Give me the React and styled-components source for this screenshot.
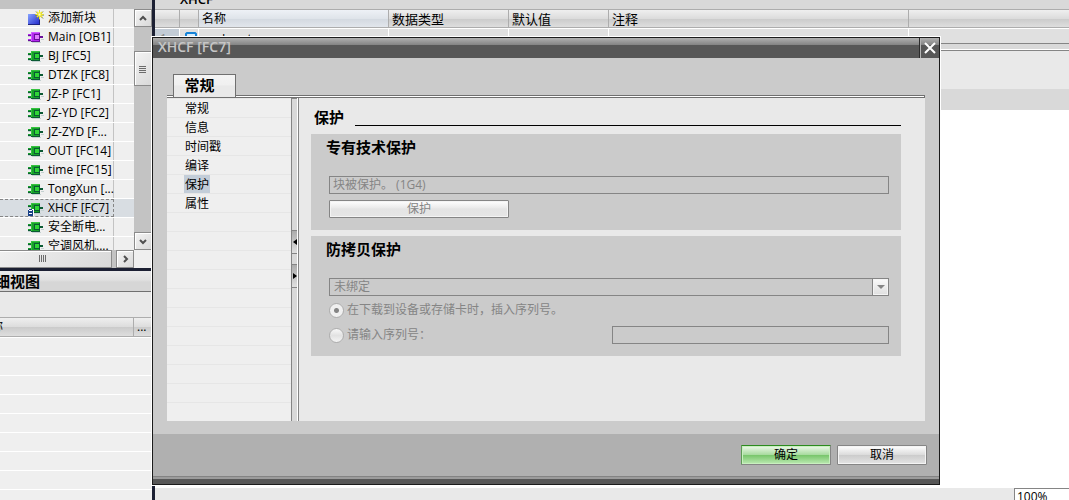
import { useState } from 'react';
import styled, { createGlobalStyle, css } from 'styled-components';

const GlobalStyle = createGlobalStyle`
  * {
    box-sizing: border-box;
  }

  body {
    margin: 0;
    overflow: hidden;
    background: #ffffff;
    color: #000000;
    font: 12px/18px 'Open Sans', 'Noto Sans CJK SC', sans-serif;
  }

  button, input, select {
    font: inherit;
    color: inherit;
    border-radius: 0;
    margin: 0;
    padding: 0;
  }

  ul {
    list-style: none;
    margin: 0;
    padding: 0;
  }
`;

const barGradient = css`
  background: linear-gradient(#efefef 0%, #dcdcdc 50%, #cbcbcb 52%, #dedede 100%);
`;

const Workspace = styled.div`
  position: relative;
  display: flex;
  height: 100vh;
  overflow: hidden;
`;

/* ---------- project tree ---------- */

const Sidebar = styled.aside`
  flex: 0 0 152px;
  display: flex;
  flex-direction: column;
  background: #efefef;
  overflow: hidden;
`;

const Divider = styled.div`
  flex: 0 0 3px;
  background: #1c2033;
`;

const SidebarTop = styled.div`
  flex: 0 0 9px;
  background: #c3c3c3;
`;

const TreeArea = styled.div`
  display: flex;
  flex: 0 0 241px;
  overflow: hidden;
`;

const Tree = styled.ul`
  flex: 1;
  min-width: 0;
`;

const TreeRow = styled.li`
  display: flex;
  height: 19px;
  border-bottom: 1px solid #ffffff;
  background: ${({ $selected }) => ($selected ? '#d8dde2' : '#efefef')};
`;

const TreeName = styled.div`
  flex: 0 0 114px;
  display: flex;
  align-items: center;
  gap: 4px;
  min-width: 0;
  padding-left: 28px;
  border-right: 1px solid #c3c3c3;
  white-space: nowrap;

  ${({ $selected }) => $selected && css`
    border-top: 1px dashed #858585;
    border-right: 1px dashed #858585;
    border-bottom: 1px dashed #858585;
  `}

  svg {
    flex: none;
  }
`;

const ScrollColumn = styled.div`
  flex: 0 0 18px;
  display: flex;
  flex-direction: column;
  background: #c3c3c3;
`;

const ScrollRow = styled.div`
  flex: 0 0 18px;
  display: flex;
  margin-left: -26px;
  padding-right: 18px;
`;

const ScrollTrack = styled.div`
  flex: ${({ $grow }) => $grow || '0 0 24px'};
  background: #c3c3c3;
`;

const ScrollPiece = styled.button`
  flex: ${({ $size }) => ($size ? `0 0 ${$size}px` : '1')};
  display: flex;
  align-items: center;
  justify-content: center;
  min-width: 0;
  border: 1px solid #8b8b8b;
  box-shadow: inset 1px 1px 0 #ffffff;
  background: linear-gradient(135deg, #f4f4f4, #d9d9d9);
`;

const DetailHeader = styled.h2`
  flex: 0 0 24px;
  margin: 0;
  border-top: 3px solid #1c2033;
  border-bottom: 1px solid #707070;
  background: linear-gradient(#ebebeb 0%, #e0e0e0 45%, #d6d6d6 55%, #d6d6d6 100%);
  font-size: 15px;
  line-height: 20px;
`;

const CutText = styled.span`
  display: flex;
  justify-content: flex-end;
  width: ${({ $width }) => $width}px;
  overflow: hidden;
  white-space: nowrap;
`;

const DetailTools = styled.div`
  flex: 0 0 25px;
  background: #e9e9e9;
`;

const DetailColumns = styled.div`
  flex: 0 0 19px;
  display: grid;
  grid-template-columns: 133px 1fr;
  border-top: 1px solid #adadad;
  border-bottom: 1px solid #adadad;
  ${barGradient}

  span + span {
    border-left: 1px solid #adadad;
    padding-left: 3px;
  }
`;

const DetailRow = styled.div`
  flex: 0 0 19px;
  border-top: 1px solid #ffffff;
`;

/* ---------- editor behind the dialog ---------- */

const Editor = styled.main`
  flex: 1;
  min-width: 0;
  display: flex;
  flex-direction: column;
`;

const EditorTitle = styled.div`
  flex: 0 0 9px;
  display: flex;
  align-items: flex-end;
  padding-left: 25px;
  background: #d9d9d9;
  overflow: hidden;
  font-size: 13px;
  line-height: 20px;
  font-weight: 600;
`;

const VariableTable = styled.table`
  width: 100%;
  border-collapse: separate;
  border-spacing: 0;
  table-layout: fixed;
`;

const HeadCell = styled.th`
  width: ${({ $width }) => ($width ? `${$width}px` : 'auto')};
  height: 19px;
  padding: 0 0 0 3px;
  border: solid #adadad;
  border-width: 1px 1px 1px 0;
  text-align: left;
  font-weight: 400;
  font-size: ${({ $active }) => ($active ? 12 : 13)}px;
  line-height: 16px;
  ${barGradient}
  ${({ $active }) => $active && css`
    background: linear-gradient(#eef1f6 0%, #dfe4ea 50%, #d3d9e0 52%, #e2e6ec 100%);
  `}

  &:last-child {
    border-right: 0;
  }
`;

const BodyCell = styled.td`
  height: 15px;
  padding: 0 0 0 ${({ $indent }) => $indent || 5}px;
  border: solid #ffffff;
  border-width: 1px 1px 0 0;
  background: ${({ $marked }) => ($marked ? '#c3ccd6' : '#e0e0e0')};
  color: ${({ $marked }) => ($marked ? '#858585' : '#000000')};
  line-height: 14px;

  &:last-child {
    border-right: 0;
  }

  div {
    height: 14px;
    overflow: hidden;
    line-height: 20px;
  }
`;

const Splitter = styled.div`
  flex: 0 0 8px;
  border: solid #858585;
  border-width: 1px 0;
  box-shadow: inset 0 -1px 0 #ffffff;
  background: #d9d9d9;
`;

const EditorTools = styled.div`
  flex: 0 0 38px;
  background: #e9e9e9;
`;

const EditorBand = styled.div`
  flex: 0 0 21px;
  background: #d9d9d9;
`;

const Canvas = styled.div`
  flex: 1;
  background: #ffffff;
`;

const StatusBar = styled.div`
  flex: 0 0 12px;
  display: flex;
  justify-content: flex-end;
  background: #e9e9e9;
  overflow: hidden;
`;

const ZoomField = styled.input`
  width: 55px;
  height: 18px;
  padding-left: 2px;
  border: 1px solid #858585;
  border-right: 0;
  background: #ffffff;
`;

/* ---------- dialog ---------- */

const Dialog = styled.section`
  position: absolute;
  top: 37px;
  left: 152px;
  right: 129px;
  border: 1px solid #1b1b1b;
  outline: 1px solid #ffffff;
  background: #cbcbcb;
`;

const TitleBar = styled.header`
  display: flex;
  height: 20px;
  background: linear-gradient(#b0b0b0 0, #838383 7px, #575757 7px);

  h1 {
    flex: 1;
    margin: 0;
    padding-left: 5px;
    color: #c6c6c6;
    font-size: 14px;
    line-height: 18px;
    font-weight: 600;
  }
`;

const CloseButton = styled.button`
  display: flex;
  align-items: center;
  justify-content: center;
  width: 20px;
  border: 0;
  border-left: 1px solid #2b2b2b;
  box-shadow: inset 1px 0 0 #b4b4b4;
  background: none;
`;

const DialogBody = styled.div`
  padding: 16px 14px 13px;
`;

const Tabs = styled.div`
  display: flex;
  padding-left: 6px;
`;

const Tab = styled.button`
  position: relative;
  width: 63px;
  height: 23px;
  margin-bottom: -2px;
  border: 1px solid #707070;
  border-bottom: 0;
  background: linear-gradient(#f4f4f4 0%, #f0f0f0 45%, #e9e9e9 50%, #e9e9e9 100%);
  font-size: 15px;
  line-height: 18px;
  font-weight: 700;
  text-align: center;
  padding: 0 10px 2px 0;
`;

const TabLine = styled.div`
  height: 3px;
  border: 1px solid #707070;
  border-left: 0;
  background: #ffffff;
`;

const Content = styled.div`
  display: flex;
  background: #e9e9e9;
`;

const Nav = styled.nav`
  flex: 0 0 124px;
  min-height: 323px;
  padding-top: 1px;
  background: linear-gradient(#efefef 18px, #e6e6e6 18px) 0 1px / 100% 19px;
`;

const NavItem = styled.li`
  display: flex;
  height: 19px;
  padding-left: 17px;

  button {
    height: 18px;
    padding: 1px 1px 0;
    border: 0;
    background: ${({ $active }) => ($active ? '#c3cdd8' : 'none')};
    line-height: 17px;
  }
`;

const NavSplitter = styled.div`
  flex: 0 0 8px;
  display: flex;
  flex-direction: column;
  gap: 10px;
  padding-top: 132px;
  border: solid #858585;
  border-width: 0 1px;
  box-shadow: inset -1px 0 0 #ffffff, inset 0 1px 0 #858585;
  background: #d9d9d9;
`;

const SplitterButton = styled.button`
  display: flex;
  align-items: center;
  justify-content: center;
  width: 5px;
  height: 24px;
  border: solid #858585;
  border-width: 1px 0;
  background: linear-gradient(#acacac, #e0e0e0);

  svg {
    flex: none;
  }
`;

const Page = styled.div`
  flex: 1;
  min-width: 0;
  padding: 11px 24px 0 12px;
`;

const PageTitle = styled.h2`
  display: flex;
  gap: 11px;
  margin: 0 0 8px;
  padding-left: 3px;
  font-size: 15px;
  line-height: 17px;

  &::after {
    content: '';
    flex: 1;
    height: 16px;
    border-bottom: 1px solid #000000;
  }
`;

const Group = styled.section`
  margin-bottom: 6px;
  padding: 4px 12px 12px 18px;
  background: #cbcbcb;
  color: #858585;

  h3 {
    margin: 0 0 20px -3px;
    color: #000000;
    font-size: 15px;
    line-height: 18px;
  }
`;

const TextField = styled.input`
  display: block;
  width: 100%;
  height: 18px;
  padding: 0 3px;
  border: 1px solid #858585;
  background: #cbcbcb;
  color: #858585;
`;

const Button = styled.button`
  width: ${({ $wide }) => ($wide ? 180 : 90)}px;
  height: ${({ $wide }) => ($wide ? 18 : 20)}px;
  border: 1px solid #858585;
  border-radius: 1px;
  box-shadow: inset 0 0 0 1px #f4f4f4;
  background: linear-gradient(#ffffff 0%, #dcdcdc 48%, #cccccc 52%, #e4e4e4 100%);
  line-height: 16px;

  &:disabled {
    display: block;
    margin-top: 6px;
    color: #858585;
    background: linear-gradient(#ffffff 0%, #ececec 40%, #e4e4e4 50%, #e6e6e6 100%);
  }

  ${({ $primary }) => $primary && css`
    border-top-color: #2c8a1f;
    border-left-color: #5f9a57;
    box-shadow: inset 0 0 0 1px #c8f0bf;
    background: linear-gradient(#eef9eb 0%, #a9dba0 48%, #79c66c 52%, #bdeab3 100%);
  `}
`;

const SelectBox = styled.div`
  display: flex;
  height: 18px;
  border: 1px solid #858585;

  select {
    flex: 1;
    appearance: none;
    border: 0;
    padding-left: 4px;
    background: none;
    color: #858585;
    opacity: 1;
    line-height: 16px;
  }
`;

const SelectArrow = styled.span`
  display: flex;
  align-items: center;
  justify-content: center;
  width: 16px;
  border-left: 1px solid #858585;
  background: linear-gradient(#fafafa, #dfdfdf);
  box-shadow: inset 0 0 0 1px #f4f4f4;
`;

const Options = styled.div`
  display: flex;
  flex-direction: column;
  gap: 7px;
  padding-top: 5px;
`;

const OptionRow = styled.div`
  display: grid;
  grid-template-columns: 283px 1fr;
  align-items: center;
  height: 18px;
`;

const RadioLabel = styled.label`
  display: flex;
  align-items: center;
  gap: 3px;
  white-space: nowrap;

  input {
    appearance: none;
    flex: none;
    width: 15px;
    height: 15px;
    border: 1px solid #adadad;
    border-radius: 50%;
    background: linear-gradient(#f8f8f8, #e2e2e2 50%, #f4f4f4);
  }

  input:checked {
    background: radial-gradient(circle, #858585 0, #858585 2px, #f0f0f0 3px);
  }
`;

const DialogFooter = styled.footer`
  display: flex;
  justify-content: flex-end;
  gap: 6px;
  height: 50px;
  padding: 11px 12px 0 0;
  background: linear-gradient(#b0b0b0 42px, #838383 42px, #838383 43px, #9b9b9b 43px, #9b9b9b 45px, #575757 45px);
`;

/* ---------- drawings ---------- */

const BlockIcon = ({ main, locked }) => {
  const [fill, dark, light, edge] = main
    ? ['#b42af0', '#6a0f9a', '#e07cff', '#cf5cff']
    : ['#17a32a', '#0b5a34', '#2fd636', '#35c23f'];
  return (
    <svg width="16" height="16" viewBox="0 0 16 16" shapeRendering="crispEdges">
      <path d="M4 13h9v1h-9zM13 10h3v1h-3zM0 7h3v1h-3zM0 12h3v1h-3z" fill="#c3d0d0" />
      <path d="M0 5h3v2h-3zM0 10h3v2h-3z" fill={fill} />
      <path d="M0 6h3v1h-3zM0 11h3v1h-3z" fill={dark} />
      <path d="M12 7h3v2h-3z" fill={dark} />
      <path d="M3 3h9v10h-9z" fill={fill} />
      <path d="M3 3h9v1h-9zM3 3h1v9h-1z" fill={edge} />
      <path d="M3 12h9v1h-9zM11 4h1v9h-1z" fill={dark} />
      <path d="M6 5h6v6h-6z" fill={dark} />
      <path d="M7 6h4v4h-4z" fill={light} />
      {locked && (
        <>
          <path d="M0 9h6v7h-6z" fill="#ffffff" />
          <path d="M0 11h5v5h-5zM1 9h3v1h-3zM0 10h1v1h-1zM4 10h1v1h-1z" fill="#173f86" />
          <path d="M1 13h3v1h-3z" fill="#ffffff" />
        </>
      )}
    </svg>
  );
};

const NewBlockIcon = () => (
  <svg width="16" height="16" viewBox="0 0 16 16">
    <defs>
      <linearGradient id="newBlock" x1="0" y1="0" x2="1" y2="1">
        <stop offset="0" stopColor="#86a4ff" />
        <stop offset="1" stopColor="#1d22c8" />
      </linearGradient>
    </defs>
    <path d="M0 4h12v11h-12z" fill="url(#newBlock)" />
    <path d="M0 14h12v1h-12zM11 8h1v7h-1z" fill="#1c2380" />
    <path d="M11.500 0v10M7 5h9M8 1.500l7 7M15 1.500l-7 7" stroke="#6e7a48" strokeWidth="1" />
    <path d="M11.500 0v9M7.500 4.500h8" stroke="#f4ea20" strokeWidth="1" />
    <path d="M9 2l5 5M14 2l-5 5" stroke="#f4ea20" strokeWidth="1.500" />
    <path d="M10.500 3.500h2v2h-2z" fill="#ffffd0" />
  </svg>
);

const Chevron = ({ d }) => (
  <svg width="10" height="10" viewBox="0 0 10 10" fill="none" stroke="#505050" strokeWidth="2">
    <path d={d} />
  </svg>
);

const Grip = ({ vertical }) => (
  <svg width="8" height="8" viewBox="0 0 8 8" shapeRendering="crispEdges" fill="#6b6b6b">
    <path d={vertical ? 'M0 0h1v7h-1zM2 0h1v7h-1zM4 0h1v7h-1zM6 0h1v7h-1z' : 'M0 1h7v1h-7zM0 3h7v1h-7zM0 5h7v1h-7zM0 7h7v1h-7z'} />
  </svg>
);

const blocks = [
  { name: 'Main [OB1]', main: true },
  { name: 'BJ [FC5]' },
  { name: 'DTZK [FC8]' },
  { name: 'JZ-P [FC1]' },
  { name: 'JZ-YD [FC2]' },
  { name: 'JZ-ZYD [F...' },
  { name: 'OUT [FC14]' },
  { name: 'time [FC15]' },
  { name: 'TongXun [...' },
  { name: 'XHCF [FC7]', selected: true },
  { name: '安全断电...' },
  { name: '空调风机....' },
];

const sections = ['常规', '信息', '时间戳', '编译', '保护', '属性'];

const ProjectTree = () => (
  <Sidebar>
    <SidebarTop />
    <TreeArea>
      <Tree>
        <TreeRow>
          <TreeName><NewBlockIcon />添加新块</TreeName>
        </TreeRow>
        {blocks.map(({ name, main, selected }) => (
          <TreeRow key={name} $selected={selected}>
            <TreeName $selected={selected}>
              <BlockIcon main={main} locked={selected} />
              {name}
            </TreeName>
          </TreeRow>
        ))}
      </Tree>
      <ScrollColumn>
        <ScrollPiece $size={18} aria-label="向上滚动"><Chevron d="M2 7l3-3 3 3" /></ScrollPiece>
        <ScrollTrack />
        <ScrollPiece $size={35} aria-label="垂直滚动条"><Grip /></ScrollPiece>
        <ScrollTrack $grow="1" />
        <ScrollPiece $size={18} aria-label="向下滚动"><Chevron d="M2 4l3 3 3-3" /></ScrollPiece>
      </ScrollColumn>
    </TreeArea>
    <ScrollRow>
      <ScrollPiece aria-label="水平滚动条"><Grip vertical /></ScrollPiece>
      <ScrollTrack $grow="0 0 4px" />
      <ScrollPiece $size={18} aria-label="向右滚动"><Chevron d="M4 2l3 3-3 3" /></ScrollPiece>
    </ScrollRow>
    <DetailHeader><CutText $width={40}>详细视图</CutText></DetailHeader>
    <DetailTools />
    <DetailColumns>
      <CutText $width={3}>名称</CutText>
      <span>...</span>
    </DetailColumns>
    {Array.from({ length: 9 }, (_, i) => <DetailRow key={i} />)}
  </Sidebar>
);

const BlockEditor = () => (
  <Editor>
    <EditorTitle>XHCF</EditorTitle>
    <VariableTable>
      <thead>
        <tr>
          <HeadCell $width={25} />
          <HeadCell $width={19} />
          <HeadCell $width={190} $active>名称</HeadCell>
          <HeadCell $width={120}>数据类型</HeadCell>
          <HeadCell $width={100}>默认值</HeadCell>
          <HeadCell $width={300}>注释</HeadCell>
          <HeadCell />
        </tr>
      </thead>
      <tbody>
        <tr>
          <BodyCell $marked><div>1</div></BodyCell>
          <BodyCell>
            <svg width="12" height="9" viewBox="0 0 12 9">
              <path d="M1 8v-5l1-1h8l1 1v5" fill="#d8ecfa" stroke="#1583d8" strokeWidth="2" />
            </svg>
          </BodyCell>
          <BodyCell $indent={23}><div>Input</div></BodyCell>
          <BodyCell />
          <BodyCell />
          <BodyCell />
          <BodyCell />
        </tr>
      </tbody>
    </VariableTable>
    <Splitter />
    <EditorTools />
    <EditorBand />
    <Canvas />
    <StatusBar>
      <ZoomField aria-label="缩放" defaultValue="100%" />
    </StatusBar>
  </Editor>
);

const PropertiesDialog = () => {
  const [section, setSection] = useState('保护');

  return (
    <Dialog role="dialog" aria-labelledby="dialog-title">
      <TitleBar>
        <h1 id="dialog-title">XHCF [FC7]</h1>
        <CloseButton aria-label="关闭">
          <svg width="12" height="12" viewBox="0 0 12 12" stroke="#ffffff" strokeWidth="2">
            <path d="M1 1l10 10M11 1l-10 10" />
          </svg>
        </CloseButton>
      </TitleBar>

      <DialogBody>
        <Tabs role="tablist">
          <Tab role="tab" aria-selected="true">常规</Tab>
        </Tabs>
        <TabLine />
        <Content>
          <Nav>
            <ul>
              {sections.map((name) => (
                <NavItem key={name} $active={name === section}>
                  <button onClick={() => setSection(name)}>{name}</button>
                </NavItem>
              ))}
            </ul>
          </Nav>
          <NavSplitter>
            <SplitterButton aria-label="折叠">
              <svg width="4" height="6" viewBox="0 0 4 6"><path d="M4 0v6l-4-3z" /></svg>
            </SplitterButton>
            <SplitterButton aria-label="展开">
              <svg width="4" height="6" viewBox="0 0 4 6"><path d="M0 0v6l4-3z" /></svg>
            </SplitterButton>
          </NavSplitter>
          <Page>
            <PageTitle>保护</PageTitle>
            <Group>
              <h3>专有技术保护</h3>
              <TextField aria-label="专有技术保护" disabled defaultValue="块被保护。 (1G4)" />
              <Button $wide disabled>保护</Button>
            </Group>
            <Group>
              <h3>防拷贝保护</h3>
              <SelectBox>
                <select aria-label="防拷贝保护" disabled>
                  <option>未绑定</option>
                </select>
                <SelectArrow>
                  <svg width="8" height="4" viewBox="0 0 8 4"><path d="M0 0h8l-4 4z" fill="#858585" /></svg>
                </SelectArrow>
              </SelectBox>
              <Options>
                <OptionRow>
                  <RadioLabel>
                    <input type="radio" name="serial" disabled defaultChecked />
                    在下载到设备或存储卡时，插入序列号。
                  </RadioLabel>
                </OptionRow>
                <OptionRow>
                  <RadioLabel>
                    <input type="radio" name="serial" disabled />
                    请输入序列号：
                  </RadioLabel>
                  <TextField aria-label="序列号" disabled />
                </OptionRow>
              </Options>
            </Group>
          </Page>
        </Content>
      </DialogBody>

      <DialogFooter>
        <Button $primary>确定</Button>
        <Button>取消</Button>
      </DialogFooter>
    </Dialog>
  );
};

const App = () => (
  <>
    <GlobalStyle />
    <Workspace>
      <ProjectTree />
      <Divider />
      <BlockEditor />
      <PropertiesDialog />
    </Workspace>
  </>
);

export default App;
